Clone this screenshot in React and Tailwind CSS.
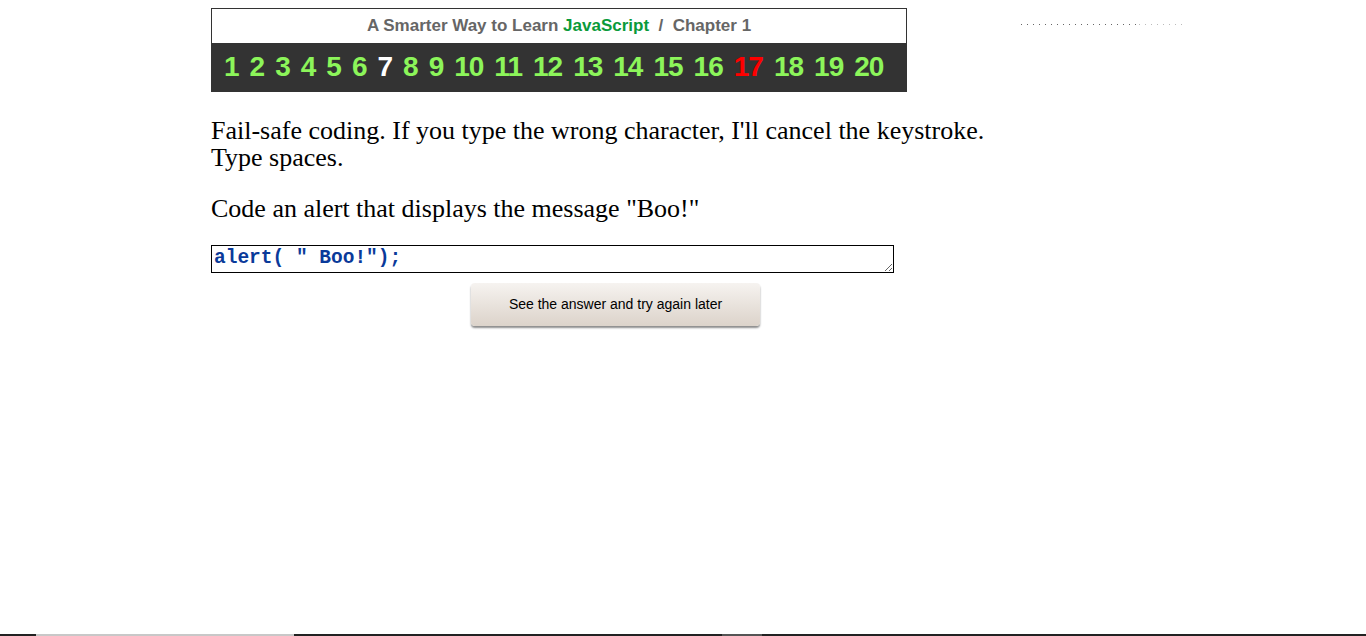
const numbers = [
  { n: '1', c: 'text-[#8cf55a]' },
  { n: '2', c: 'text-[#8cf55a]' },
  { n: '3', c: 'text-[#8cf55a]' },
  { n: '4', c: 'text-[#8cf55a]' },
  { n: '5', c: 'text-[#8cf55a]' },
  { n: '6', c: 'text-[#8cf55a]' },
  { n: '7', c: 'text-white' },
  { n: '8', c: 'text-[#8cf55a]' },
  { n: '9', c: 'text-[#8cf55a]' },
  { n: '10', c: 'text-[#8cf55a]' },
  { n: '11', c: 'text-[#8cf55a]' },
  { n: '12', c: 'text-[#8cf55a]' },
  { n: '13', c: 'text-[#8cf55a]' },
  { n: '14', c: 'text-[#8cf55a]' },
  { n: '15', c: 'text-[#8cf55a]' },
  { n: '16', c: 'text-[#8cf55a]' },
  { n: '17', c: 'text-[#ff0000]' },
  { n: '18', c: 'text-[#8cf55a]' },
  { n: '19', c: 'text-[#8cf55a]' },
  { n: '20', c: 'text-[#8cf55a]' },
];

const App = () => {
  return (
    <div className="min-h-screen flex flex-col bg-white">
      <div className="flex-1 flex">
        {/* Main column */}
        <div className="ml-[211px] mt-[8px] w-[790px]">
          {/* Chapter header */}
          <div className="w-[696px] border border-[#333]">
            <div className="h-[34px] flex items-center justify-center font-['Liberation_Sans',sans-serif] font-bold text-[17px] text-[#666]">
              A Smarter Way to Learn&nbsp;<span className="text-[#0a9a3a]">JavaScript</span>&nbsp;&nbsp;/&nbsp;&nbsp;Chapter 1
            </div>
            <div className="h-[48px] bg-[#333] flex items-center pl-[12px] gap-[11px] font-['Liberation_Sans',sans-serif] font-bold text-[28px] tracking-[-1px]">
              {numbers.map((item) => (
                <span key={item.n} className={item.c}>{item.n}</span>
              ))}
            </div>
          </div>

          {/* Instructions */}
          <div className="mt-[25px] font-['Liberation_Serif',serif] text-[26px] leading-[27px] text-black whitespace-nowrap">
            <p>Fail-safe coding. If you type the wrong character, I'll cancel the keystroke.</p>
            <p>Type spaces.</p>
            <p className="mt-[24px]">Code an alert that displays the message "Boo!"</p>
          </div>

          {/* Answer box */}
          <textarea
            className="mt-[23px] block w-[683px] h-[28px] border border-black px-[2px] py-0 font-['Liberation_Mono',monospace] font-bold text-[19.5px] leading-[24px] text-[#0a3a9a] outline-none resize"
            defaultValue={'alert( " Boo!");'}
            rows={1}
          />

          <div className="flex pl-[260px] mt-[10px]">
            <button className="w-[289px] h-[43px] rounded-[4px] bg-gradient-to-b from-[#f6f3f0] to-[#dcd3ca] shadow-[0_2px_2px_rgba(0,0,0,0.45)] font-['Liberation_Sans',sans-serif] text-[14px] text-black">
              See the answer and try again later
            </button>
          </div>
        </div>

        {/* Dotted rule on the right */}
        <div className="ml-[20px] mt-[24px] flex h-[1px]">
          <div className="w-[118px] h-[1px] bg-[repeating-linear-gradient(to_right,#666_0px,#666_1px,transparent_1px,transparent_6px)]" />
          <div className="w-[48px] h-[1px] bg-[repeating-linear-gradient(to_right,#bbb_0px,#bbb_1px,transparent_1px,transparent_6px)]" />
        </div>
      </div>

      {/* Bottom strip */}
      <div className="h-[2px] flex">
        <div className="w-[36px] bg-[#222]" />
        <div className="w-[258px] bg-[#c8c8c8]" />
        <div className="w-[428px] bg-[#222]" />
        <div className="w-[40px] bg-[#555]" />
        <div className="flex-1 bg-[#222]" />
      </div>
    </div>
  );
};

export default App;
